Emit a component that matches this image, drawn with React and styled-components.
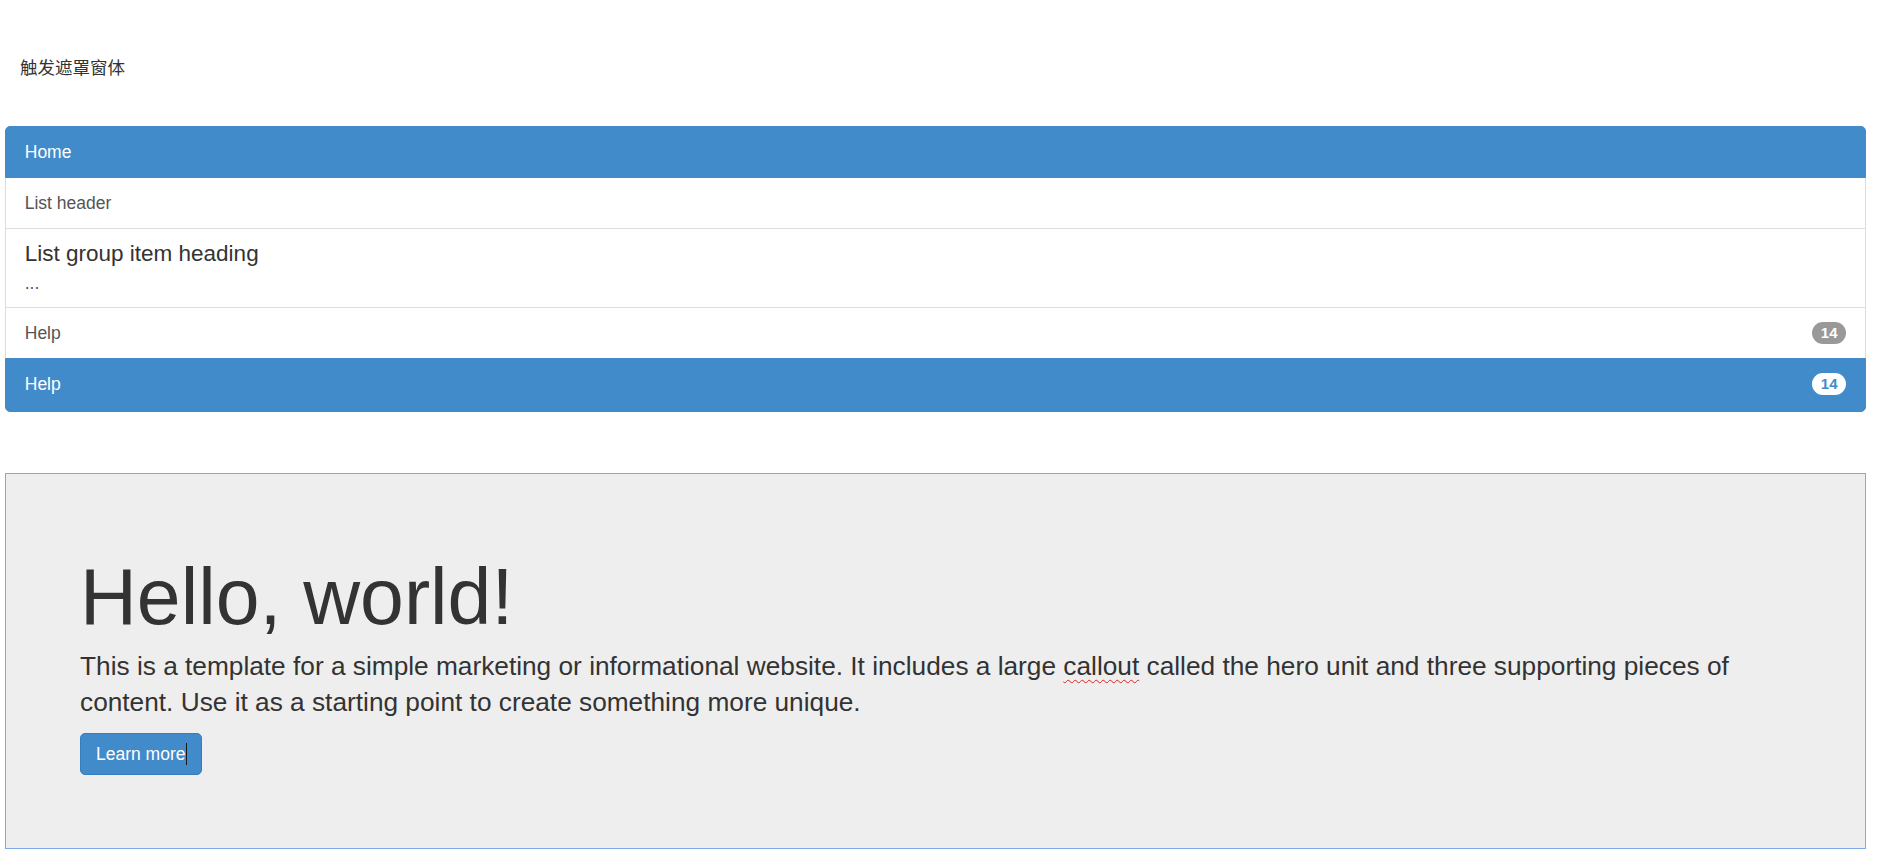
import React from 'react';
import styled, { createGlobalStyle } from 'styled-components';

const GlobalStyle = createGlobalStyle`
  html, body {
    margin: 0;
    padding: 0;
    background: #ffffff;
  }
  body {
    font-family: 'Liberation Sans', Arial, 'Noto Sans CJK SC', sans-serif;
    font-size: 17.5px;
    line-height: 25px;
    color: #333333;
  }
  * {
    box-sizing: border-box;
  }
`;

const Page = styled.div`
  display: flex;
  flex-direction: column;
  padding: 0 12px 0 5px;
`;

const Trigger = styled.div`
  padding: 54px 0 47px 15px;
  font-family: 'Noto Sans CJK SC', 'Liberation Sans', sans-serif;
  font-size: 17.5px;
  line-height: 25px;
  color: #333333;
  cursor: pointer;
`;

const ListGroup = styled.div`
  display: flex;
  flex-direction: column;
  margin-bottom: 61px;
`;

const ListItem = styled.a`
  position: relative;
  display: block;
  padding: 12.5px 18.75px;
  margin-bottom: -1px;
  font-size: 17.5px;
  line-height: 25px;
  text-decoration: none;
  background: ${props => (props.active ? '#428bca' : '#ffffff')};
  color: ${props => (props.active ? '#ffffff' : '#555555')};
  border: 1px solid ${props => (props.active ? '#428bca' : '#dddddd')};
  z-index: ${props => (props.active ? 2 : 1)};

  &:first-child {
    border-top-left-radius: 5px;
    border-top-right-radius: 5px;
  }
  &:last-child {
    margin-bottom: 0;
    padding-bottom: 14px;
    border-bottom-left-radius: 5px;
    border-bottom-right-radius: 5px;
  }
`;

const ItemHeading = styled.h4`
  margin: 0 0 5.5px;
  font-size: 22.5px;
  font-weight: 500;
  line-height: 1.1;
  color: #333333;
`;

const ItemText = styled.p`
  margin: 0;
  line-height: 1.3;
  color: #555555;
`;

const Badge = styled.span`
  float: right;
  display: inline-block;
  min-width: 12.5px;
  padding: 3.75px 8.75px;
  font-size: 15px;
  font-weight: 700;
  line-height: 1;
  text-align: center;
  white-space: nowrap;
  border-radius: 12.5px;
  background: ${props => (props.inverse ? '#ffffff' : '#999999')};
  color: ${props => (props.inverse ? '#428bca' : '#ffffff')};
  margin-top: 1px;
`;

const Jumbotron = styled.div`
  background: #eeeeee;
  border: 1px solid #7eaaea;
  padding: 60px 74px 60px;
`;

const Title = styled.h1`
  margin: 20px 0 7.5px;
  font-size: 78.75px;
  font-weight: 500;
  line-height: 1.1;
  color: #333333;
`;

const Lead = styled.p`
  margin: 0 0 12.5px;
  font-size: 26.25px;
  line-height: 36.5px;
  font-weight: 200;
  color: #333333;
`;

const Misspelled = styled.span`
  text-decoration: underline wavy #e02020;
  text-decoration-thickness: 1px;
  text-underline-offset: 4px;
`;

const Actions = styled.p`
  margin: 0 0 12.5px;
`;

const Button = styled.a`
  display: inline-block;
  padding: 7.5px 15px;
  font-size: 17.5px;
  line-height: 25px;
  color: #ffffff;
  background: #428bca;
  border: 1px solid #357ebd;
  border-radius: 5px;
  text-decoration: none;
  cursor: pointer;
`;

const Caret = styled.span`
  display: inline-block;
  width: 0;
  height: 22px;
  margin-right: -1px;
  border-left: 1px solid #1a1a1a;
  vertical-align: -5px;
`;

const App = () => (
  <>
    <GlobalStyle />
    <Page>
      <Trigger>触发遮罩窗体</Trigger>

      <ListGroup>
        <ListItem href="#" active>
          Home
        </ListItem>
        <ListItem href="#">List header</ListItem>
        <ListItem href="#">
          <ItemHeading>List group item heading</ItemHeading>
          <ItemText>...</ItemText>
        </ListItem>
        <ListItem href="#">
          <Badge>14</Badge>
          Help
        </ListItem>
        <ListItem href="#" active>
          <Badge inverse>14</Badge>
          Help
        </ListItem>
      </ListGroup>

      <Jumbotron>
        <Title>Hello, world!</Title>
        <Lead>
          This is a template for a simple marketing or informational website.
          It includes a large <Misspelled>callout</Misspelled> called the hero
          unit and three supporting pieces of content. Use it as a starting
          point to create something more unique.
        </Lead>
        <Actions>
          <Button>
            Learn more
            <Caret />
          </Button>
        </Actions>
      </Jumbotron>
    </Page>
  </>
);

export default App;
